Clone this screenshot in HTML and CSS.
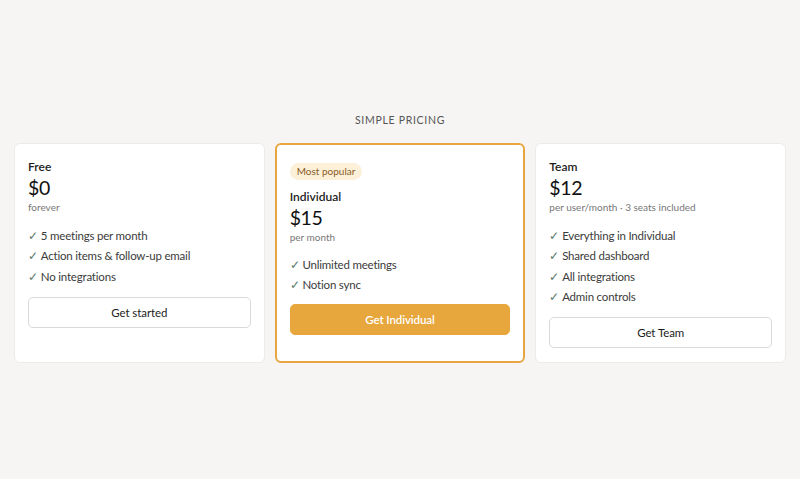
FILE: index.html
```html
<!DOCTYPE html>
<html lang="en">
<head>
<meta charset="utf-8">
<title>Simple pricing</title>
<link rel="stylesheet" href="styles.css">
</head>
<body>
<main class="page">
  <section class="pricing">
    <h2 class="eyebrow">Simple pricing</h2>
    <div class="plans">
      <article class="plan">
        <h3 class="plan-name">Free</h3>
        <div class="price">$0</div>
        <div class="period">forever</div>
        <ul class="features">
          <li><span class="check">✓</span>5 meetings per month</li>
          <li><span class="check">✓</span>Action items &amp; follow-up email</li>
          <li><span class="check">✓</span>No integrations</li>
        </ul>
        <button class="btn btn-outline">Get started</button>
      </article>
      <article class="plan plan-featured">
        <span class="badge">Most popular</span>
        <h3 class="plan-name">Individual</h3>
        <div class="price">$15</div>
        <div class="period">per month</div>
        <ul class="features">
          <li><span class="check">✓</span>Unlimited meetings</li>
          <li><span class="check">✓</span>Notion sync</li>
        </ul>
        <button class="btn btn-primary">Get Individual</button>
      </article>
      <article class="plan">
        <h3 class="plan-name">Team</h3>
        <div class="price">$12</div>
        <div class="period">per user/month · 3 seats included</div>
        <ul class="features">
          <li><span class="check">✓</span>Everything in Individual</li>
          <li><span class="check">✓</span>Shared dashboard</li>
          <li><span class="check">✓</span>All integrations</li>
          <li><span class="check">✓</span>Admin controls</li>
        </ul>
        <button class="btn btn-outline">Get Team</button>
      </article>
    </div>
  </section>
</main>
</body>
</html>
```

FILE: styles.css
```css
* { box-sizing: border-box; }
html, body { margin: 0; padding: 0; }
body {
  background: #f6f5f3;
  font-family: "Lato", "Noto Sans", sans-serif;
  color: #1c1c1c;
}
.page {
  min-height: 479px;
  display: flex;
  align-items: center;
  justify-content: center;
  padding: 0 14px 4px;
}
.pricing { width: 100%; }
.eyebrow {
  margin: 0 0 15px;
  text-align: center;
  font-size: 10.5px;
  font-weight: 400;
  letter-spacing: 0.7px;
  text-transform: uppercase;
  color: #555;
  line-height: 16px;
}
.plans {
  display: grid;
  grid-template-columns: repeat(3, 1fr);
  gap: 10px;
}
.plan {
  background: #fff;
  border: 1px solid #ebebe8;
  border-radius: 6px;
  padding: 14px 13px 14px;
  display: flex;
  flex-direction: column;
  align-items: stretch;
}
.plan-featured {
  border: 2px solid #e8a540;
  padding: 18px 13px 13px;
}
.badge {
  align-self: flex-start;
  background: #fdf0d8;
  color: #8a5a1e;
  font-size: 10px;
  line-height: 17px;
  padding: 0 7px;
  border-radius: 9px;
  margin-bottom: 8px;
}
.plan-name {
  margin: 0;
  font-size: 12px;
  font-weight: 600;
  line-height: 17px;
  color: #1c1c1c;
}
.price {
  font-size: 19.5px;
  letter-spacing: -0.4px;
  line-height: 26px;
  font-weight: 400;
  color: #111;
}
.period {
  font-size: 10px;
  line-height: 13px;
  color: #777;
}
.features {
  list-style: none;
  margin: 12px 0 10px;
  padding: 0;
}
.features li {
  font-size: 11.5px;
  letter-spacing: -0.2px;
  line-height: 20.3px;
  color: #3b3b3b;
}
.plan-featured .features { margin: 11px 0 9px; }
.plan-featured .features li { line-height: 20px; }
.check {
  color: #5b7b6b;
  margin-right: 3px;
}
.btn {
  font-family: inherit;
  font-size: 11.5px;
  letter-spacing: -0.1px;
  height: 31px;
  border-radius: 5px;
  cursor: pointer;
  width: 100%;
}
.btn-outline {
  background: #fff;
  border: 1px solid #d9d9d6;
  color: #1c1c1c;
}
.btn-primary {
  background: #e8a73c;
  border: 1px solid #e8a73c;
  color: #fff;
  font-weight: 600;
}
```
